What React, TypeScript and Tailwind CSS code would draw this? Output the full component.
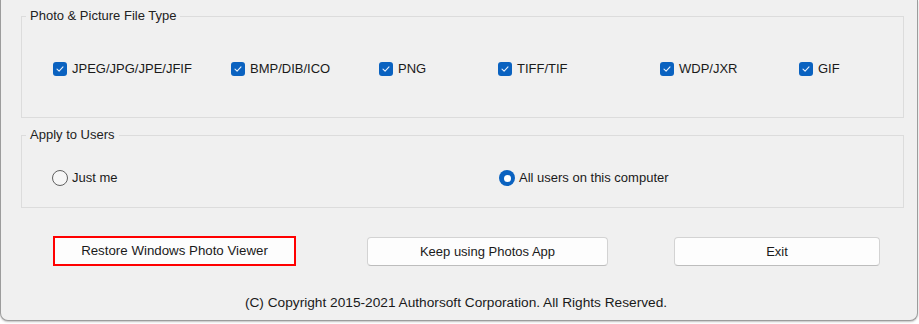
import { useState } from 'react';

const fileTypes = [
  { label: 'JPEG/JPG/JPE/JFIF', width: 'w-[178px]' },
  { label: 'BMP/DIB/ICO', width: 'w-[148px]' },
  { label: 'PNG', width: 'w-[119px]' },
  { label: 'TIFF/TIF', width: 'w-[162px]' },
  { label: 'WDP/JXR', width: 'w-[139px]' },
  { label: 'GIF', width: 'w-[60px]' },
];

function CheckBox({ label, checked, onToggle }: { label: string; checked: boolean; onToggle: () => void }) {
  return (
    <label className="flex items-center gap-[5px] cursor-default select-none" onClick={onToggle}>
      <span
        className={
          checked
            ? 'flex h-[14px] w-[14px] items-center justify-center rounded-[3px] bg-[#0a62c0]'
            : 'flex h-[14px] w-[14px] items-center justify-center rounded-[3px] border border-[#5a5a5a] bg-[#fbfbfb]'
        }
      >
        {checked && (
          <svg width="10" height="10" viewBox="0 0 10 10" fill="none">
            <path d="M2 5.2 L4.1 7.2 L8 2.9" stroke="#e8f0fa" strokeWidth="1.1" strokeLinecap="round" strokeLinejoin="round" />
          </svg>
        )}
      </span>
      <span>{label}</span>
    </label>
  );
}

function Radio({ label, selected, onSelect }: { label: string; selected: boolean; onSelect: () => void }) {
  return (
    <label className="flex items-center gap-[4px] cursor-default select-none" onClick={onSelect}>
      {selected ? (
        <span className="flex h-[16px] w-[16px] items-center justify-center rounded-full bg-[#0a62c0]">
          <span className="h-[7px] w-[7px] rounded-full bg-white" />
        </span>
      ) : (
        <span className="h-[16px] w-[16px] rounded-full border border-[#606060] bg-[#f6f6f6]" />
      )}
      <span>{label}</span>
    </label>
  );
}

export default function App() {
  const [checked, setChecked] = useState<boolean[]>(fileTypes.map(() => true));
  const [allUsers, setAllUsers] = useState(true);

  const toggle = (i: number) => setChecked((c) => c.map((v, j) => (j === i ? !v : v)));

  const btn =
    'flex h-[29px] items-center justify-center rounded-[4px] border border-[#d3d3d3] border-b-[#bdbdbd] bg-[#fdfdfd] text-[#1a1a1a]';

  return (
    <div className="h-[324px] w-[919px] bg-white" style={{ fontFamily: '"Liberation Sans", Arial, sans-serif' }}>
      <div className="flex h-[321px] w-[918px] flex-col rounded-b-[8px] border-x border-b border-[#9c9c9c] bg-[#f0f0f0] pl-[20px] pr-[13px] pt-[8px] text-[13px] leading-[16px] text-[#1a1a1a] shadow-[0_1px_2px_rgba(0,0,0,0.25)]">
        <fieldset className="border border-[#dcdcdc]">
          <legend className="ml-[4px] px-[4px] text-[#222]">Photo &amp; Picture File Type</legend>
          <div className="flex pb-[40px] pl-[31px] pt-[37px]">
            {fileTypes.map((t, i) => (
              <div key={t.label} className={t.width}>
                <CheckBox label={t.label} checked={checked[i]} onToggle={() => toggle(i)} />
              </div>
            ))}
          </div>
        </fieldset>

        <fieldset className="mt-[9px] border border-[#dcdcdc]">
          <legend className="ml-[4px] px-[4px] text-[#222]">Apply to Users</legend>
          <div className="flex pb-[21px] pl-[30px] pt-[27px]">
            <div className="w-[447px]">
              <Radio label="Just me" selected={!allUsers} onSelect={() => setAllUsers(false)} />
            </div>
            <Radio label="All users on this computer" selected={allUsers} onSelect={() => setAllUsers(true)} />
          </div>
        </fieldset>

        <div className="mt-[28px] flex items-start pl-[32px]">
          <div className="h-[30px] w-[243px] border-2 border-[#f00] bg-[#fdfdfd]">
            <button className="flex h-full w-full items-center justify-center text-[13.3px] text-[#1a1a1a]">Restore Windows Photo Viewer</button>
          </div>
          <button className={`${btn} ml-[71px] mt-[1px] w-[241px]`}>Keep using Photos App</button>
          <button className={`${btn} ml-[66px] mt-[1px] w-[206px]`}>Exit</button>
        </div>

        <p className="mt-[29px] pr-[13px] text-center text-[13.7px] text-[#1a1a1a]">(C) Copyright 2015-2021 Authorsoft Corporation. All Rights Reserved.</p>
      </div>
    </div>
  );
}
